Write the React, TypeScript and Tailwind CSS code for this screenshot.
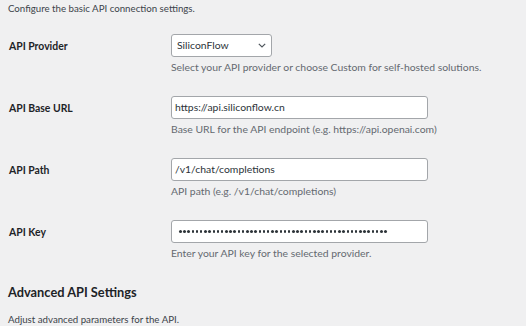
import React from "react";

function Row({ label, children, desc }: { label: string; children: React.ReactNode; desc: string }) {
  return (
    <div className="flex">
      <div className="w-[163px] shrink-0 pt-[4px] pl-[1px] text-[10.4px] leading-4 font-bold text-[#1d2327]">{label}</div>
      <div className="flex flex-col">
        {children}
        <p className="mt-[2px] text-[10.4px] leading-4 text-[#646970]">{desc}</p>
      </div>
    </div>
  );
}

function TextBox({ children }: { children: React.ReactNode }) {
  return (
    <div className="w-[257px] h-[23px] bg-white border border-[#a3a6aa] rounded-[3px] flex items-center pl-[3px] text-[10.4px] text-[#2c3338] overflow-hidden whitespace-nowrap">
      {children}
    </div>
  );
}

export default function App() {
  const dots = Array.from({ length: 50 });
  return (
    <div className="w-[526px] h-[326px] bg-[#f0f0f1] overflow-hidden px-2 font-['Lato',sans-serif]">
      <p className="text-[9.7px] leading-4 text-[#3c434a]">Configure the basic API connection settings.</p>
      <div className="mt-[18px] flex flex-col gap-[21px]">
        <Row label="API Provider" desc="Select your API provider or choose Custom for self-hosted solutions.">
          <div className="w-[101px] h-[23px] bg-white border border-[#a3a6aa] rounded-[3px] flex items-center justify-between pl-[5px] pr-[5px] text-[10.4px] text-[#2c3338]">
            <span>SiliconFlow</span>
            <svg width="8" height="5" viewBox="0 0 8 5" fill="none">
              <path d="M0.8 0.8l3.2 3.2L7.2 0.8" stroke="#50575e" strokeWidth="1.2" />
            </svg>
          </div>
        </Row>
        <Row label="API Base URL" desc="Base URL for the API endpoint (e.g. https://api.openai.com)">
          <TextBox>https://api.siliconflow.cn</TextBox>
        </Row>
        <Row label="API Path" desc="API path (e.g. /v1/chat/completions)">
          <TextBox>/v1/chat/completions</TextBox>
        </Row>
        <Row label="API Key" desc="Enter your API key for the selected provider.">
          <TextBox>
            <span className="flex gap-[1.7px] pl-[4px]">
              {dots.map((_, i) => (
                <span key={i} className="w-[2.5px] h-[2.5px] rounded-full bg-[#2c3338]" />
              ))}
            </span>
          </TextBox>
        </Row>
      </div>
      <h2 className="mt-[21px] text-[12.8px] leading-5 font-bold text-[#1d2327]">Advanced API Settings</h2>
      <p className="mt-[9px] text-[9.7px] leading-4 text-[#3c434a]">Adjust advanced parameters for the API.</p>
    </div>
  );
}
